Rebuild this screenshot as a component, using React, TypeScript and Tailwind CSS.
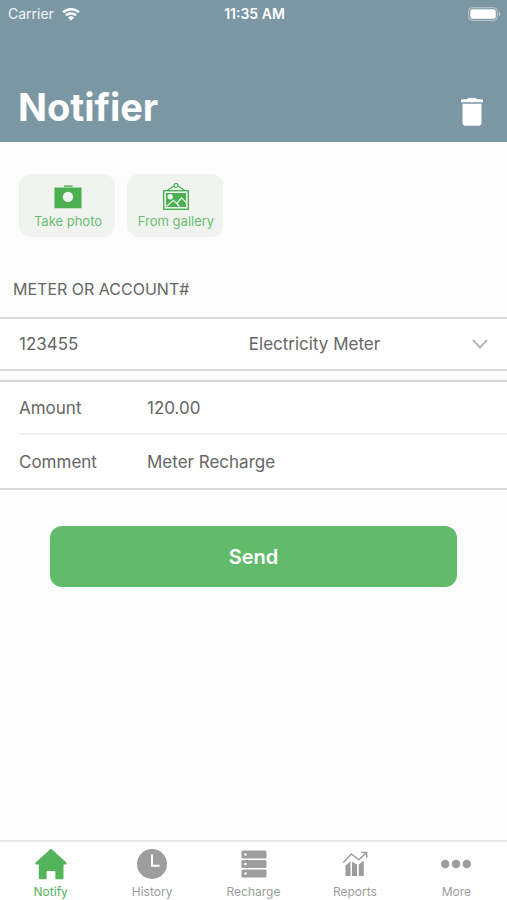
import React, { useState } from "react";

function cn(...parts: Array<string | false | null | undefined>) {
  return parts.filter(Boolean).join(" ");
}

function WifiIcon() {
  return (
    <svg viewBox="0 0 18 13" className="w-[18px] h-[13px]" fill="currentColor" aria-hidden="true">
      <path d="M9 0C5.600 0 2.500 1.300.2 3.500l1.700 1.800A10.200 10.200 0 0 1 9 2.500c2.700 0 5.200 1 7.100 2.800l1.700-1.800A12.700 12.700 0 0 0 9 0Z" />
      <path d="M9 4.200c-2.300 0-4.300.9-5.900 2.300l1.700 1.800A6.200 6.200 0 0 1 9 6.700c1.600 0 3.100.6 4.200 1.600l1.700-1.800A8.700 8.700 0 0 0 9 4.200Z" />
      <path d="M9 8.300c-1.200 0-2.200.4-3 1.200l3 3.200 3-3.200a4.300 4.300 0 0 0-3-1.200Z" />
    </svg>
  );
}

function BatteryIcon() {
  return (
    <svg viewBox="0 0 33 14" className="w-[33px] h-[14px]" aria-hidden="true">
      <rect x="0.700" y="0.700" width="28.600" height="12.600" rx="3.500" fill="none" stroke="#fff" strokeOpacity="0.5" />
      <rect x="2.300" y="2.300" width="25.400" height="9.400" rx="2" fill="#fff" />
      <path d="M30.800 4.800c1 .4 1.600 1.200 1.600 2.200s-.6 1.800-1.600 2.200Z" fill="#fff" fillOpacity="0.5" />
    </svg>
  );
}

function TrashIcon() {
  return (
    <svg viewBox="0 0 22 28" className="w-[22px] h-7" fill="currentColor" aria-hidden="true">
      <path d="M6 1.200C6.400.4 7 0 8 0h6c1 0 1.600.4 2 1.200h5.200c.5 0 .8.3.8.8v2.200H0V2c0-.5.3-.8.8-.8H6Z" />
      <path d="M1.500 5.800h19v19c0 1.800-1 2.900-2.800 2.900H4.300c-1.800 0-2.800-1.100-2.800-2.900v-19Z" />
    </svg>
  );
}

function CameraIcon() {
  return (
    <svg viewBox="0 0 28 28" className="w-7 h-7" fill="currentColor" aria-hidden="true">
      <path d="M10 2.400h8.500v1.400H10z" />
      <path
        fillRule="evenodd"
        d="M.5 4.600h27v20.700H.5V4.600Zm13.500 4.100a5.200 5.200 0 1 0 0 10.400 5.200 5.200 0 0 0 0-10.400Z"
      />
    </svg>
  );
}

function GalleryIcon() {
  return (
    <svg viewBox="0 0 28 28" className="w-7 h-7" fill="none" stroke="currentColor" aria-hidden="true">
      <path d="M5 7.500 11.800 3M23 7.500 16.200 3" strokeWidth="1.200" />
      <circle cx="14" cy="2.500" r="2" strokeWidth="1.200" />
      <rect x="1.700" y="7.700" width="24.600" height="18.600" strokeWidth="1.400" />
      <rect x="4" y="10" width="20" height="14" fill="currentColor" stroke="none" />
      <circle cx="8.200" cy="13.800" r="2.700" fill="#f1f3f1" stroke="none" />
      <path d="m4.500 23.500 6.800-6.300 3.500 3.300 4.700-5.700 5 5M14.800 20.500l2.700 3" stroke="#f1f3f1" strokeWidth="1.200" />
    </svg>
  );
}

function HomeIcon() {
  return (
    <svg viewBox="0 0 32 32" className="w-8 h-8" fill="currentColor" aria-hidden="true">
      <path d="M15.200 1.300c.5-.5 1.100-.5 1.600 0l14.500 13.200c.5.5.5 1 .1 1.400-.3.4-.7.5-1.200.5h-1.700v13c0 1.200-.6 1.900-1.700 1.900h-6.400v-7.600c0-.5-.3-.8-.8-.8h-7.200c-.5 0-.8.3-.8.8v7.600H5.500c-1.100 0-1.700-.7-1.700-1.900v-13H1.800c-.5 0-.9-.1-1.200-.5-.4-.4-.4-.9.1-1.400L15.200 1.300Z" />
    </svg>
  );
}

function ClockIcon() {
  return (
    <svg viewBox="0 0 32 32" className="w-8 h-8" aria-hidden="true">
      <circle cx="16" cy="16" r="15" fill="currentColor" />
      <path d="M16 6.500v11.300h7.500" fill="none" stroke="#fff" strokeWidth="2" />
    </svg>
  );
}

function ServerIcon() {
  return (
    <svg viewBox="0 0 32 32" className="w-8 h-8" aria-hidden="true">
      {[2.5, 12, 21.5].map((y) => (
        <g key={y}>
          <rect x="3.500" y={y} width="25" height="8" rx="1.500" fill="currentColor" />
          <circle cx="7.500" cy={y + 4} r="1.300" fill="#fff" />
        </g>
      ))}
    </svg>
  );
}

function ChartIcon() {
  return (
    <svg viewBox="0 0 32 32" className="w-8 h-8" fill="currentColor" aria-hidden="true">
      <path
        d="m4.200 14.700 8.300-8.700 7.200 5.800 7.800-7M22.500 4.500h5.200v5.200"
        fill="none"
        stroke="currentColor"
        strokeWidth="1.500"
      />
      <path d="M6.500 17.500 11.500 13.500v14.500h-5ZM13 13.500l5 3v11.500h-5ZM19.800 16.500l5-4V28h-5Z" />
    </svg>
  );
}

function DotsIcon() {
  return (
    <svg viewBox="0 0 32 32" className="w-8 h-8" fill="currentColor" aria-hidden="true">
      <circle cx="5.200" cy="16" r="4.200" />
      <circle cx="16" cy="16" r="4.200" />
      <circle cx="26.800" cy="16" r="4.200" />
    </svg>
  );
}

const tabs = [
  { label: "Notify", icon: HomeIcon },
  { label: "History", icon: ClockIcon },
  { label: "Recharge", icon: ServerIcon },
  { label: "Reports", icon: ChartIcon },
  { label: "More", icon: DotsIcon },
];

const photoActions = [
  { label: "Take photo", icon: CameraIcon },
  { label: "From gallery", icon: GalleryIcon },
];

const fieldClass = "min-w-0 flex-1 h-full bg-transparent text-[17px] outline-none";

export default function App() {
  const [account, setAccount] = useState("123455");
  const [meterType, setMeterType] = useState("Electricity Meter");
  const [amount, setAmount] = useState("120.00");
  const [comment, setComment] = useState("Meter Recharge");
  const [activeTab, setActiveTab] = useState("Notify");

  const clearForm = () => {
    setAccount("");
    setAmount("");
    setComment("");
  };

  return (
    <div className="min-h-screen flex flex-col bg-[#fcfcfc] text-[#666666] font-['Inter',sans-serif]">
      <header className="bg-[#7b97a4] text-white">
        <div className="grid grid-cols-3 items-center h-7 pl-2 pr-1.5 text-sm">
          <div className="flex items-center gap-2">
            <span className="text-white/90">Carrier</span>
            <WifiIcon />
          </div>
          <div className="text-center font-semibold">11:35 AM</div>
          <div className="flex justify-end">
            <BatteryIcon />
          </div>
        </div>
        <div className="flex items-end justify-between pt-14 pb-3 pl-[18px] pr-6">
          <h1 className="text-[38px] leading-[46px] font-bold">Notifier</h1>
          <button type="button" aria-label="Delete" onClick={clearForm} className="pb-1">
            <TrashIcon />
          </button>
        </div>
      </header>

      <main>
        <div className="flex gap-3 px-[19px] pt-8 pb-1">
          {photoActions.map((it) => {
            const Icon = it.icon;
            return (
              <button
                key={it.label}
                type="button"
                className="w-24 h-[63px] pt-[9px] pl-0.5 flex flex-col items-center rounded-xl bg-[#f1f3f1] text-[#4cb050]"
              >
                <Icon />
                <span className="text-[13px] leading-5 whitespace-nowrap text-[#6abf70]">{it.label}</span>
              </button>
            );
          })}
        </div>

        <h2 className="px-[13px] pt-9 pb-4 text-base leading-6">METER OR ACCOUNT#</h2>

        <div className="flex items-center h-[54px] px-[19px] bg-white border-y-2 border-[#d8d8d8]">
          <input
            type="text"
            aria-label="Meter or account number"
            value={account}
            onChange={(e) => setAccount(e.target.value)}
            className="w-[49%] h-full bg-transparent text-[17px] outline-none"
          />
          <div className="relative flex-1 h-full">
            <select
              aria-label="Meter type"
              value={meterType}
              onChange={(e) => setMeterType(e.target.value)}
              className="w-full h-full pt-0.5 appearance-none bg-transparent text-[17px] outline-none"
            >
              <option>Electricity Meter</option>
              <option>Water Meter</option>
              <option>Gas Meter</option>
            </select>
            <svg
              viewBox="0 0 16 10"
              className="absolute right-0 inset-y-0 my-auto w-4 h-2.5 pointer-events-none"
              fill="none"
              stroke="#bcbcbc"
              strokeWidth="2.200"
              aria-hidden="true"
            >
              <path d="m1 1 7 7.500L15 1" />
            </svg>
          </div>
        </div>

        <div className="mt-[9px] pl-[19px] bg-white border-y-2 border-[#d8d8d8]">
          <div className="flex items-center h-[53px] border-b-2 border-[#f2f2f2]">
            <label htmlFor="amount" className="w-32 pt-0.5 text-[17px]">
              Amount
            </label>
            <input
              id="amount"
              type="text"
              inputMode="decimal"
              value={amount}
              onChange={(e) => setAmount(e.target.value)}
              className={fieldClass}
            />
          </div>
          <div className="flex items-center h-[53px]">
            <label htmlFor="comment" className="w-32 pt-0.5 text-[17px]">
              Comment
            </label>
            <input
              id="comment"
              type="text"
              value={comment}
              onChange={(e) => setComment(e.target.value)}
              className={fieldClass}
            />
          </div>
        </div>

        <div className="px-[50px] py-9">
          <button type="button" className="w-full h-[61px] rounded-xl bg-[#61bb6b] text-white text-xl font-semibold">
            Send
          </button>
        </div>
      </main>

      <nav className="mt-auto flex bg-white border-t-2 border-[#e8e8e8]">
        {tabs.map((it) => {
          const Icon = it.icon;
          const active = activeTab === it.label;
          return (
            <button
              key={it.label}
              type="button"
              onClick={() => setActiveTab(it.label)}
              className={cn(
                "flex-1 basis-0 flex flex-col items-center gap-1 pt-1.5",
                active ? "text-[#53b55b]" : "text-[#9d9d9d]"
              )}
            >
              <Icon />
              <span className="text-xs">{it.label}</span>
            </button>
          );
        })}
      </nav>
    </div>
  );
}
